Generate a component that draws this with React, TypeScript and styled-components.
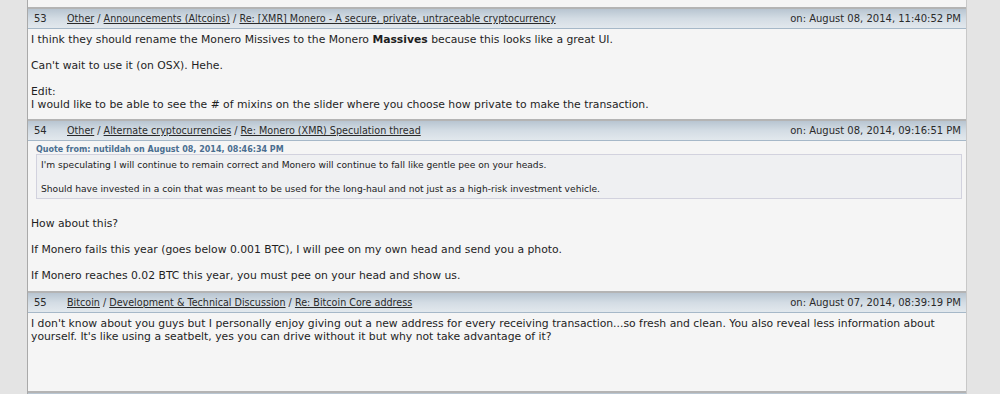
import styled, { createGlobalStyle } from 'styled-components';

const GlobalStyle = createGlobalStyle`
    html, body {
        margin: 0;
        padding: 0;
        background: #e4e4e4;
    }
    body {
        font-family: 'DejaVu Sans', Verdana, sans-serif;
        color: #222;
    }
`;

const Page = styled.div`
    width: 1000px;
    height: 394px;
    overflow: hidden;
    background: #e4e4e4;
`;

const Column = styled.div`
    margin-left: 27px;
    width: 938px;
    min-height: 394px;
    background: #f5f5f5;
    border-left: 1px solid #a9a9a9;
    border-right: 1px solid #c8c8c8;
`;

const Leftover = styled.div`
    height: 7px;
`;

const Post = styled.div`
    border-top: 2px solid #b4b4b4;
`;

const Header = styled.div`
    display: flex;
    align-items: center;
    height: 19px;
    padding: 0 5px 0 6px;
    font-size: 10px;
    color: #2a2a2a;
    background: linear-gradient(to bottom, #b8c5d1 0%, #d3dce4 50%, #e2e8ed 100%);
    border-bottom: 1px solid #a6b8c8;

    a {
        color: #2a2a2a;
        text-decoration: underline;
    }
`;

const Num = styled.span`
    width: 33px;
`;

const Crumbs = styled.span`
    flex: 1;
    font-size: 9.6px;
    white-space: nowrap;
`;

const DateText = styled.span`
    white-space: nowrap;
`;

const Body = styled.div<{ $height: number }>`
    height: ${(p) => p.$height}px;
    padding: 4px 4px 0 3px;
    font-size: 10.8px;
    line-height: 13px;
    color: #1e1e1e;

    p {
        margin: 0;
    }
`;

const QuoteHead = styled.div`
    margin-left: 5px;
    font-size: 8px;
    font-weight: bold;
    line-height: 9px;
    color: #4a6e90;
`;

const QuoteBox = styled.div`
    margin: 0 0 5px 5px;
    padding: 4px 5px 3px 4px;
    background: #eff0f2;
    border: 1px solid #d2d2de;
    font-size: 9.15px;
    line-height: 12px;
    color: #222;
`;

const Blank = styled.div`
    height: 13px;
`;

const App = () => {
    return (
        <Page>
            <GlobalStyle />
            <Column>
                <Leftover />

                <Post>
                    <Header>
                        <Num>53</Num>
                        <Crumbs>
                            <a>Other</a> / <a>Announcements (Altcoins)</a> /{' '}
                            <a>Re: [XMR] Monero - A secure, private, untraceable cryptocurrency</a>
                        </Crumbs>
                        <DateText>on: August 08, 2014, 11:40:52 PM</DateText>
                    </Header>
                    <Body $height={86}>
                        <p>
                            I think they should rename the Monero Missives to the Monero <b>Massives</b> because this
                            looks like a great UI.
                        </p>
                        <Blank />
                        <p>Can't wait to use it (on OSX). Hehe.</p>
                        <Blank />
                        <p>Edit:</p>
                        <p>I would like to be able to see the # of mixins on the slider where you choose how private to make the transaction.</p>
                    </Body>
                </Post>

                <Post>
                    <Header>
                        <Num>54</Num>
                        <Crumbs>
                            <a>Other</a> / <a>Alternate cryptocurrencies</a> /{' '}
                            <a>Re: Monero (XMR) Speculation thread</a>
                        </Crumbs>
                        <DateText>on: August 08, 2014, 09:16:51 PM</DateText>
                    </Header>
                    <Body $height={146}>
                        <QuoteHead>Quote from: nutildah on August 08, 2014, 08:46:34 PM</QuoteHead>
                        <QuoteBox>
                            I'm speculating I will continue to remain correct and Monero will continue to fall like
                            gentle pee on your heads.
                            <br />
                            <br />
                            Should have invested in a coin that was meant to be used for the long-haul and not just as a
                            high-risk investment vehicle.
                        </QuoteBox>
                        <Blank />
                        <p>How about this?</p>
                        <Blank />
                        <p>If Monero fails this year (goes below 0.001 BTC), I will pee on my own head and send you a photo.</p>
                        <Blank />
                        <p>If Monero reaches 0.02 BTC this year, you must pee on your head and show us.</p>
                    </Body>
                </Post>

                <Post>
                    <Header>
                        <Num>55</Num>
                        <Crumbs>
                            <a>Bitcoin</a> / <a>Development &amp; Technical Discussion</a> /{' '}
                            <a>Re: Bitcoin Core address</a>
                        </Crumbs>
                        <DateText>on: August 07, 2014, 08:39:19 PM</DateText>
                    </Header>
                    <Body $height={74}>
                        <p>
                            I don't know about you guys but I personally enjoy giving out a new address for every
                            receiving transaction...so fresh and clean. You also reveal less information about yourself.
                            It's like using a seatbelt, yes you can drive without it but why not take advantage of it?
                        </p>
                    </Body>
                </Post>

                <Post>
                    <Header />
                </Post>
            </Column>
        </Page>
    );
};

export default App;
